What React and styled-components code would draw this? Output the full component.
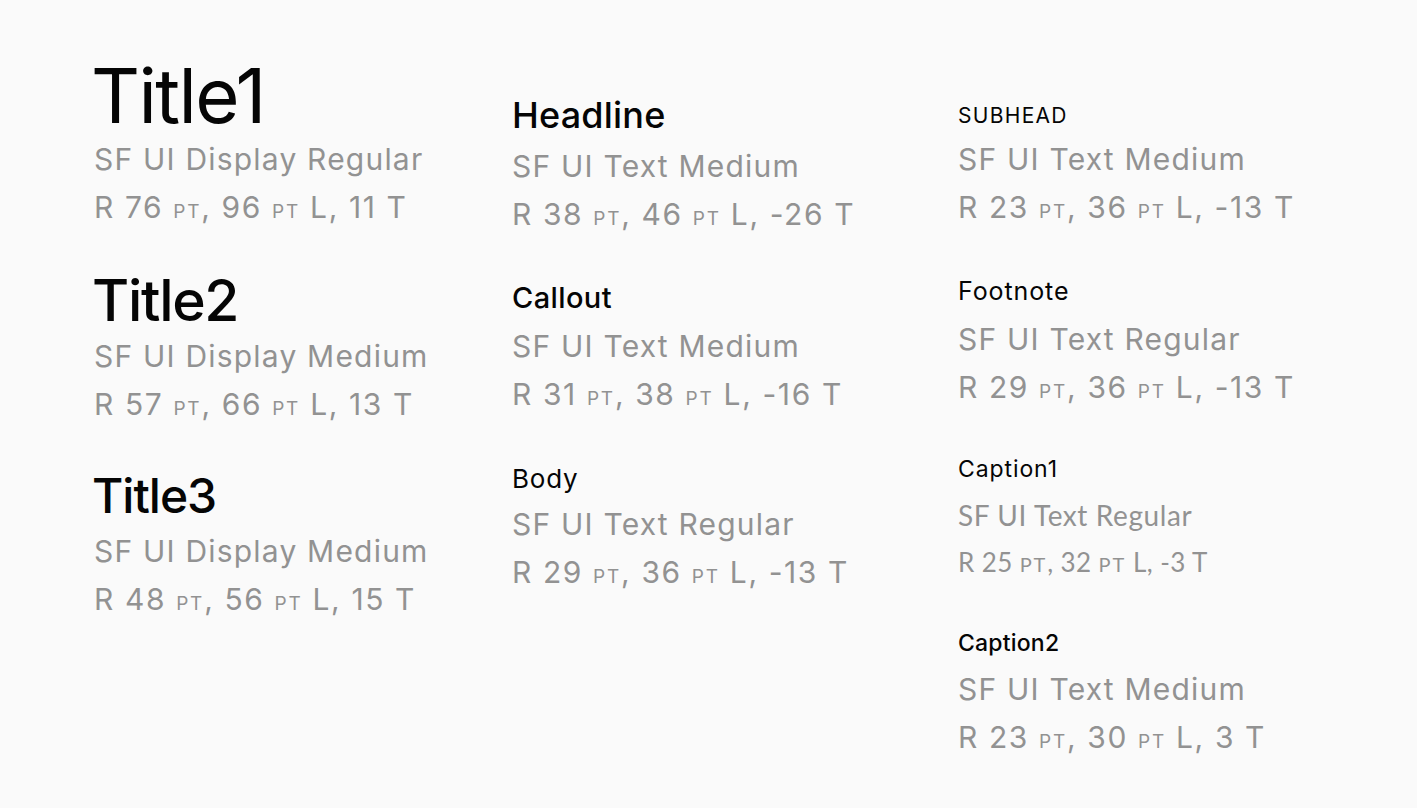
import React from "react";
import styled, { createGlobalStyle } from "styled-components";

const Global = createGlobalStyle`
  html, body { margin: 0; padding: 0; background: #fafafa; }
  body { font-family: "Inter", "Noto Sans", sans-serif; -webkit-font-smoothing: antialiased; }
`;

const Page = styled.div`
  width: 1417px;
  height: 808px;
  box-sizing: border-box;
  padding-left: 94px;
  display: grid;
  grid-template-columns: 418px 446px 1fr;
  align-items: start;
  background: #fafafa;
  overflow: hidden;
`;

const Column = styled.div`
  display: flex;
  flex-direction: column;
  padding-top: ${(p) => p.$pt}px;
`;

const Block = styled.div`
  display: flex;
  flex-direction: column;
  margin-top: ${(p) => p.$mt}px;
`;

const Title = styled.div`
  font-family: "Inter", sans-serif;
  font-size: ${(p) => p.$fs}px;
  line-height: ${(p) => p.$lh}px;
  font-weight: ${(p) => p.$fw};
  letter-spacing: ${(p) => p.$ls || 0}px;
  margin-left: ${(p) => p.$ml || 0}px;
  color: #050505;
  white-space: nowrap;
`;

const Meta = styled.div`
  font-family: ${(p) => (p.$alt ? '"Lato", sans-serif' : '"Inter", sans-serif')};
  font-size: ${(p) => p.$fs || 30}px;
  line-height: ${(p) => p.$lh || 48}px;
  height: ${(p) => p.$lh || 48}px;
  font-weight: 400;
  letter-spacing: ${(p) => p.$ls}px;
  color: #929292;
  white-space: nowrap;
`;

const Pt = styled.span`
  font-size: ${(p) => p.$fs || 19}px;
  line-height: 0;
  letter-spacing: 1.8px;
`;

const Spec = ({ r, l, t, alt }) => (
  <Meta $alt={alt} $fs={alt ? 26 : 30} $lh={alt ? 47 : 48} $ls={alt ? 0.4 : 1.6}>
    R {r} <Pt $fs={alt ? 20 : 19}>PT</Pt>, {l} <Pt $fs={alt ? 20 : 19}>PT</Pt> L, {t} T
  </Meta>
);

const columns = [
  {
    pt: 56,
    blocks: [
      { mt: 0, name: "Title1", fs: 76, lh: 79, fw: 400, ls: -1.6, ml: -3, font: "SF UI Display Regular", r: 76, l: 96, t: 11 },
      { mt: 39, name: "Title2", fs: 57, lh: 62, fw: 500, ls: -1.3, ml: -2, font: "SF UI Display Medium", r: 57, l: 66, t: 13 },
      { mt: 36, name: "Title3", fs: 48, lh: 63, fw: 500, ls: -1.0, ml: -2, font: "SF UI Display Medium", r: 48, l: 56, t: 15 },
    ],
  },
  {
    pt: 88,
    blocks: [
      { mt: 0, name: "Headline", fs: 36, lh: 54, fw: 500, ls: 0.2, font: "SF UI Text Medium", r: 38, l: 46, t: "-26" },
      { mt: 35, name: "Callout", fs: 29, lh: 49, fw: 500, ls: 0.4, font: "SF UI Text Medium", r: 31, l: 38, t: "-16" },
      { mt: 40, name: "Body", fs: 26, lh: 42, fw: 400, ls: 0.8, font: "SF UI Text Regular", r: 29, l: 36, t: "-13" },
    ],
  },
  {
    pt: 96,
    blocks: [
      { mt: 0, name: "SUBHEAD", fs: 21, lh: 39, fw: 400, ls: 1.3, font: "SF UI Text Medium", r: 23, l: 36, t: "-13" },
      { mt: 36, name: "Footnote", fs: 25, lh: 48, fw: 400, ls: 0.9, font: "SF UI Text Regular", r: 29, l: 36, t: "-13" },
      { mt: 36, name: "Caption1", fs: 23, lh: 45, fw: 400, ls: 0.9, font: "SF UI Text Regular", r: 25, l: 32, t: "-3", alt: true },
      { mt: 36, name: "Caption2", fs: 23, lh: 43, fw: 500, ls: 0.2, font: "SF UI Text Medium", r: 23, l: 30, t: "3" },
    ],
  },
];

export default function App() {
  return (
    <>
      <Global />
      <Page>
        {columns.map((col, i) => (
          <Column key={i} $pt={col.pt}>
            {col.blocks.map((b) => (
              <Block key={b.name} $mt={b.mt}>
                <Title $fs={b.fs} $lh={b.lh} $fw={b.fw} $ls={b.ls} $ml={b.ml}>
                  {b.name}
                </Title>
                <Meta $alt={b.alt} $fs={b.alt ? 28 : 30} $lh={b.alt ? 47 : 48} $ls={b.alt ? 0.6 : 1.2}>
                  {b.font}
                </Meta>
                <Spec r={b.r} l={b.l} t={b.t} alt={b.alt} />
              </Block>
            ))}
          </Column>
        ))}
      </Page>
    </>
  );
}
